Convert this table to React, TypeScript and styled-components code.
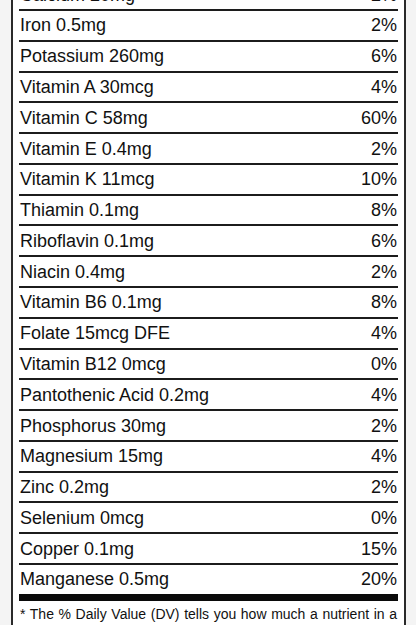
import styled, { createGlobalStyle } from "styled-components";

const GlobalStyle = createGlobalStyle`
  html, body {
    margin: 0;
    padding: 0;
    background: #f4f4f4;
    font-family: "Liberation Sans", Arial, Helvetica, sans-serif;
    color: #111;
  }
  body {
    height: 625px;
    overflow: hidden;
  }
`;

// the page is scrolled so the Calcium row is cut at the top
const Label = styled.section`
  margin: -21.8px 10px 0 11px;
  background: #fff;
  border: 2px solid #2a2a2a;
  border-top: none;
  padding: 0 6px 12px;
`;

const Row = styled.div`
  display: flex;
  justify-content: space-between;
  align-items: baseline;
  border-top: 2px solid #1c1c1c;
  padding: 4.4px 1px 3.4px 1px;
  font-size: 18px;
  line-height: 21px;
`;

const Name = styled.span`
  white-space: nowrap;
`;

const Percent = styled.span`
  text-align: right;
`;

const ThickRule = styled.div`
  height: 7px;
  background: #0a0a0a;
`;

const Footnote = styled.p`
  margin: 0;
  padding: 2px 1px 0;
  font-size: 14px;
  line-height: 22px;
  text-align: justify;
`;

const nutrients = [
  ["Calcium 20mg", "2%"],
  ["Iron 0.5mg", "2%"],
  ["Potassium 260mg", "6%"],
  ["Vitamin A 30mcg", "4%"],
  ["Vitamin C 58mg", "60%"],
  ["Vitamin E 0.4mg", "2%"],
  ["Vitamin K 11mcg", "10%"],
  ["Thiamin 0.1mg", "8%"],
  ["Riboflavin 0.1mg", "6%"],
  ["Niacin 0.4mg", "2%"],
  ["Vitamin B6 0.1mg", "8%"],
  ["Folate 15mcg DFE", "4%"],
  ["Vitamin B12 0mcg", "0%"],
  ["Pantothenic Acid 0.2mg", "4%"],
  ["Phosphorus 30mg", "2%"],
  ["Magnesium 15mg", "4%"],
  ["Zinc 0.2mg", "2%"],
  ["Selenium 0mcg", "0%"],
  ["Copper 0.1mg", "15%"],
  ["Manganese 0.5mg", "20%"],
];

export default function App() {
  return (
    <>
      <GlobalStyle />
      <Label>
        {nutrients.map(([name, dv]) => (
          <Row key={name}>
            <Name>{name}</Name>
            <Percent>{dv}</Percent>
          </Row>
        ))}
        <ThickRule />
        <Footnote>
          * The % Daily Value (DV) tells you how much a nutrient in a serving
          of food contributes to a daily diet. 2,000 calories a day is used for
          general nutrition advice.
        </Footnote>
      </Label>
    </>
  );
}
